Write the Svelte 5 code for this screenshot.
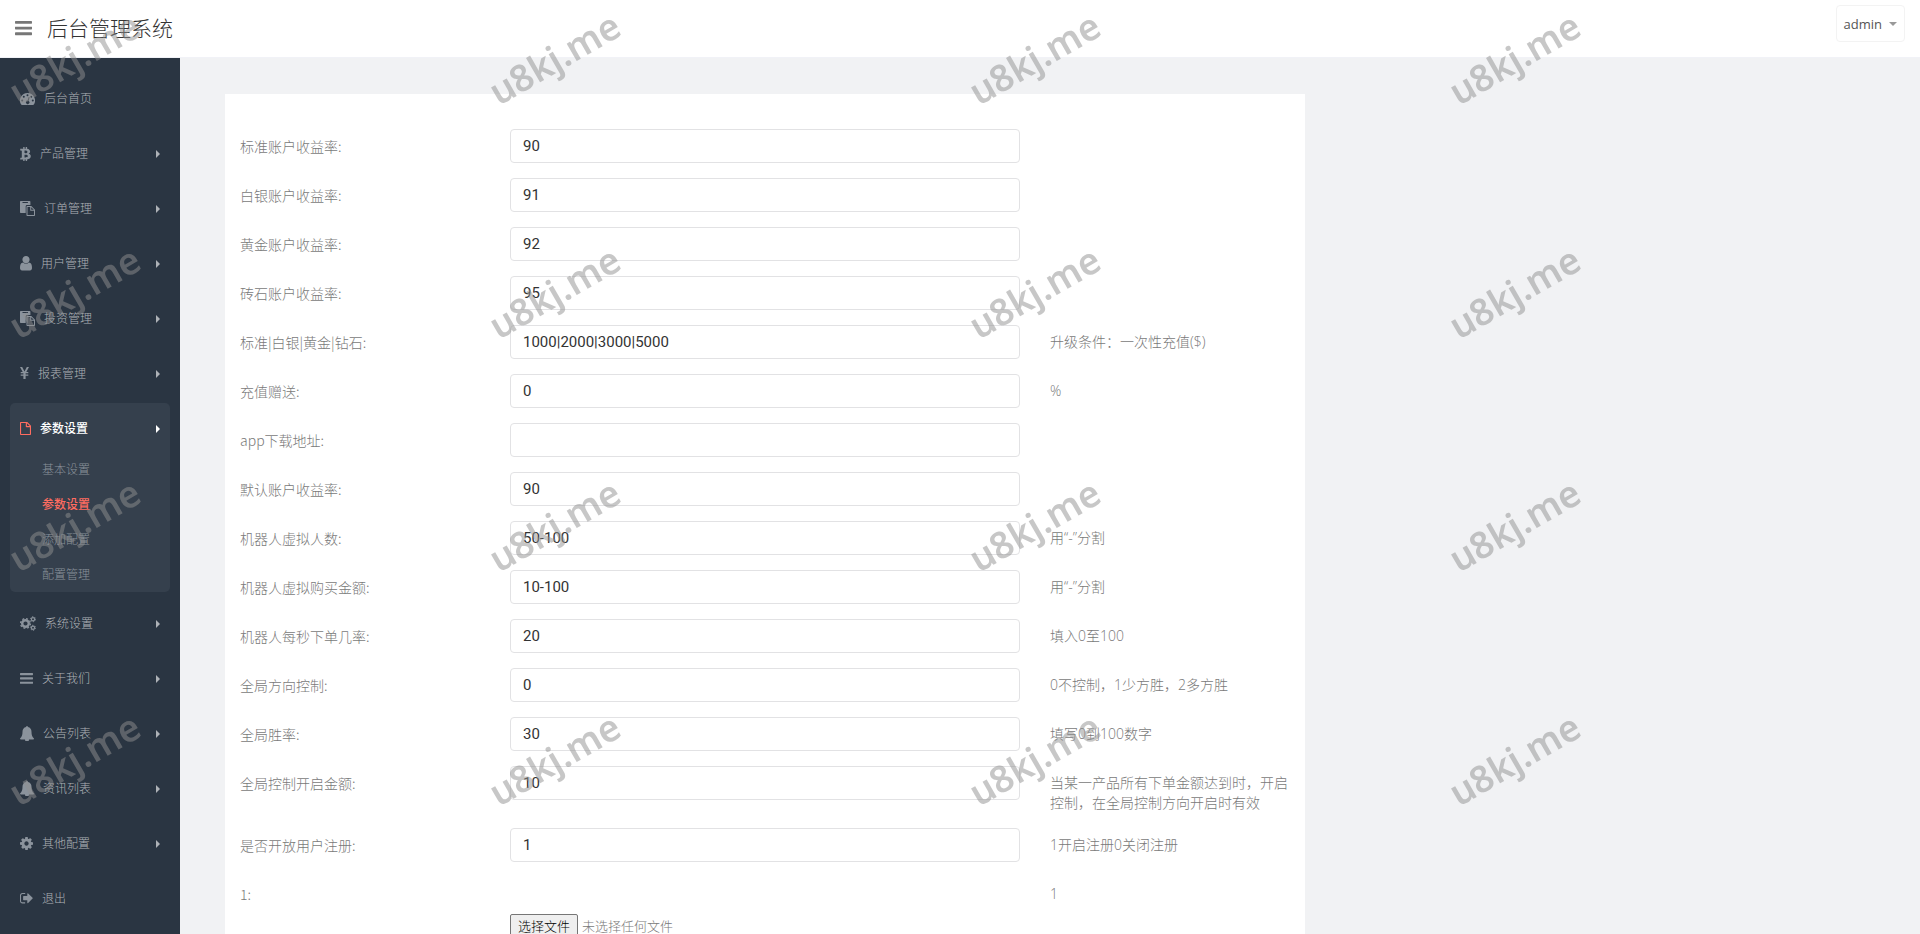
<script>
  const sprites = {
    dashboard: {
      w: 15,
      box: '0 0 15 14',
      d: 'M7.500 1A7.500 7.500 0 0 0 1.200 12.600q.2.400.7.400h11.200q.5 0 .7-.4A7.500 7.500 0 0 0 7.500 1zM2.200 7.600a1 1 0 1 1 0 2 1 1 0 0 1 0-2zM3.800 3.800a1 1 0 1 1 0 2 1 1 0 0 1 0-2zM7.500 2.200a1 1 0 1 1 0 2 1 1 0 0 1 0-2zM11.200 3.800a1 1 0 1 1 0 2 1 1 0 0 1 0-2zM12.800 7.600a1 1 0 1 1 0 2 1 1 0 0 1 0-2zM8.700 4.900l.9.300-1 3.700a1.700 1.700 0 1 1-1-.3z'
    },
    bitcoin: {
      w: 11,
      box: '0 0 11 14',
      d: 'M.2 1.700h3V0h1.400v1.700h1.100V0h1.400v1.800c1.900.2 3 1.200 3 2.800 0 1.100-.5 1.800-1.500 2.200 1.500.3 2.200 1.200 2.200 2.500 0 1.900-1.500 2.900-3.700 3.100V14H5.700v-1.600H4.600V14H3.200v-1.600H.1l.3-1.700h.9q.5 0 .5-.5V4q0-.6-.7-.6H.2zM4.500 3.600v2.500c1.700.1 2.900 0 2.900-1.200S6.200 3.600 4.500 3.600zM4.500 7.800v2.700c2 .1 3.300 0 3.300-1.400S6.500 7.700 4.500 7.800z'
    },
    paste: {
      w: 15,
      box: '0 0 15 15',
      d: 'M.7 0h9q.7 0 .7.700V4H7q-1.300 0-1.300 1.300V12H.7Q0 12 0 11.300V.7Q0 0 .7 0zM2.500 1v1h5.400V1zM7.200 5h4.100l3.700 3.700v5.600q0 .7-.7.700H7.200q-.7 0-.7-.7V5.700q0-.7.7-.7zM7.500 6v8H14V9.800h-3.200q-.6 0-.6-.6V6zM11.200 6.200v2.600h2.600z'
    },
    user: {
      w: 12,
      box: '256 128 1280 1536',
      d: 'M1536 1399q0 109-62.500 187t-150.500 78h-854q-88 0-150.500-78t-62.500-187q0-85 8.500-160.500t31.500-152 58.500-131 94-89 134.500-34.500q131 128 313 128t313-128q76 0 134.500 34.500t94 89 58.500 131 31.500 152 8.500 160.500zm-256-887q0 159-112.500 271.500t-271.500 112.500-271.500-112.500-112.500-271.500 112.500-271.500 271.500-112.500 271.500 112.500 112.500 271.500z'
    },
    yen: {
      w: 9,
      box: '0 0 9 13',
      d: 'M0 0h2.200l2.300 4.500L6.800 0H9L6.300 5h2v1.300H5.600v1.200h2.700v1.300H5.600V12H3.400V8.800H.7V7.500h2.700V6.300H.7V5h2z'
    },
    file: {
      w: 11,
      box: '0 0 11 13',
      d: 'M.8 0h6.500L11 3.700v8.500q0 .8-.8.800H.8Q0 13 0 12.200V.8Q0 0 .8 0zM1.100 1.100v10.800h8.800V5.200H6.600q-.8 0-.8-.8V1.100zM6.900 1.300v2.800h2.800z'
    },
    cogs: { w: 16, box: '0 0 16 15', gears: true },
    bars: {
      w: 13,
      box: '128 256 1536 1280',
      d: 'M1664 1344v128q0 26-19 45t-45 19h-1408q-26 0-45-19t-19-45v-128q0-26 19-45t45-19h1408q26 0 45 19t19 45zm0-512v128q0 26-19 45t-45 19h-1408q-26 0-45-19t-19-45v-128q0-26 19-45t45-19h1408q26 0 45 19t19 45zm0-512v128q0 26-19 45t-45 19h-1408q-26 0-45-19t-19-45v-128q0-26 19-45t45-19h1408q26 0 45 19t19 45z'
    },
    bell: {
      w: 14,
      box: '0 0 14 15',
      d: 'M7 0q.9 0 .9 1.100C10.300 1.600 11.500 3.400 11.500 5.800c0 3.200.7 5.300 2.500 6.700 0 .6-.4 1-1 1H9a2 2 0 0 1-4 0H1q-1 0-1-1c1.800-1.400 2.500-3.500 2.500-6.700 0-2.400 1.200-4.200 3.600-4.700Q6.100 0 7 0z'
    },
    cog: {
      w: 13,
      box: '128 128 1536 1536',
      d: 'M1152 896q0-106-75-181t-181-75-181 75-75 181 75 181 181 75 181-75 75-181zm512-109v222q0 12-8 23t-20 13l-185 28q-19 54-39 91 35 50 107 138 10 12 10 25t-9 23q-27 37-99 108t-94 71q-12 0-26-9l-138-108q-44 23-91 38-16 136-29 186-7 28-36 28h-222q-14 0-24.500-8.500t-11.500-21.500l-28-184q-49-16-90-37l-141 107q-10 9-25 9-14 0-25-11-126-114-165-168-7-10-7-23 0-12 8-23 15-21 51-66.500t54-70.500q-27-50-41-99l-183-27q-13-2-21-12.500t-8-23.500v-222q0-12 8-23t19-13l186-28q14-46 39-92-40-57-107-138-10-12-10-24 0-10 9-23 26-36 98.500-107.500t94.500-71.500q13 0 26 10l138 107q44-23 91-38 16-136 29-186 7-28 36-28h222q14 0 24.500 8.500t11.500 21.500l28 184q49 16 90 37l142-107q9-9 24-9 13 0 25 10 129 119 165 170 7 8 7 22 0 12-8 23-15 21-51 66.500t-54 70.500q26 50 41 98l183 28q13 2 21 12.500t8 23.500z'
    },
    signout: {
      w: 13,
      box: '64 256 1600 1280',
      d: 'M704 1440q0 4 1 20t.5 26.500-3 23.500-10 19.500-20.500 6.500h-320q-119 0-203.500-84.500t-84.500-203.500v-704q0-119 84.500-203.500t203.500-84.500h320q13 0 22.500 9.500t9.500 22.500q0 4 1 20t.5 26.500-3 23.500-10 19.500-20.500 6.500h-320q-66 0-113 47t-47 113v704q0 66 47 113t113 47h312l11.500 1 11.500 3 8 5.500 7 9 2 13.500zm928-544q0 26-19 45l-544 544q-19 19-45 19t-45-19-19-45v-288h-448q-26 0-45-19t-19-45v-384q0-26 19-45t45-19h448v-288q0-26 19-45t45-19 45 19l544 544q19 19 19 45z'
    }
  };

  const menu = [
    { icon: 'dashboard', text: '后台首页', leaf: true },
    { icon: 'bitcoin', text: '产品管理' },
    { icon: 'paste', text: '订单管理' },
    { icon: 'user', text: '用户管理' },
    { icon: 'paste', text: '投资管理' },
    { icon: 'yen', text: '报表管理' },
    {
      icon: 'file',
      text: '参数设置',
      children: ['基本设置', '参数设置', '添加配置', '配置管理'],
      current: 1
    },
    { icon: 'cogs', text: '系统设置' },
    { icon: 'bars', text: '关于我们' },
    { icon: 'bell', text: '公告列表' },
    { icon: 'bell', text: '资讯列表' },
    { icon: 'cog', text: '其他配置' },
    { icon: 'signout', text: '退出', leaf: true }
  ];

  const fields = [
    { label: '标准账户收益率', value: '90' },
    { label: '白银账户收益率', value: '91' },
    { label: '黄金账户收益率', value: '92' },
    { label: '砖石账户收益率', value: '95' },
    { label: '标准|白银|黄金|钻石', value: '1000|2000|3000|5000', hint: '升级条件：一次性充值($)' },
    { label: '充值赠送', value: '0', hint: '%' },
    { label: 'app下载地址', value: '' },
    { label: '默认账户收益率', value: '90' },
    { label: '机器人虚拟人数', value: '50-100', hint: '用“-”分割' },
    { label: '机器人虚拟购买金额', value: '10-100', hint: '用“-”分割' },
    { label: '机器人每秒下单几率', value: '20', hint: '填入0至100' },
    { label: '全局方向控制', value: '0', hint: '0不控制，1少方胜，2多方胜' },
    { label: '全局胜率', value: '30', hint: '填写0到100数字' },
    {
      label: '全局控制开启金额',
      value: '10',
      hint: '当某一产品所有下单金额达到时，开启控制，在全局控制方向开启时有效'
    },
    { label: '是否开放用户注册', value: '1', hint: '1开启注册0关闭注册' }
  ];

  const marks = Array.from({ length: 16 }, (_, i) => i);
</script>

{#snippet icon(name)}
  {@const s = sprites[name]}
  <svg class="icon" style="width: {s.w}px" viewBox={s.box} aria-hidden="true">
    {#if s.gears}
      <g fill="none" stroke="currentColor">
        <circle cx="5.500" cy="7.500" r="3.300" stroke-width="2.400" />
        <circle cx="5.500" cy="7.500" r="4.900" stroke-width="1.400" stroke-dasharray="1.925 1.925" />
        <circle cx="13" cy="3.200" r="1.600" stroke-width="1.200" />
        <circle cx="13" cy="3.200" r="2.500" stroke-width="1" stroke-dasharray="1.310 1.308" />
        <circle cx="13" cy="11.800" r="1.600" stroke-width="1.200" />
        <circle cx="13" cy="11.800" r="2.500" stroke-width="1" stroke-dasharray="1.310 1.308" />
      </g>
    {:else}
      <path d={s.d} fill="currentColor" fill-rule="evenodd" />
    {/if}
  </svg>
{/snippet}

<div class="app">
  <header>
    <button class="toggle" aria-label="菜单">{@render icon('bars')}</button>
    <h1>后台管理系统</h1>
    <button class="account">admin <span class="caret"></span></button>
  </header>

  <div class="body">
    <nav>
      <ul class="menu">
        {#each menu as item}
          <li class:open={item.children}>
            <a class="entry" href="#top">
              {@render icon(item.icon)}
              <span>{item.text}</span>
              {#if !item.leaf}<i class="arrow"></i>{/if}
            </a>
            {#if item.children}
              <ul class="sub">
                {#each item.children as child, i}
                  <li><a href="#top" class:current={i === item.current}>{child}</a></li>
                {/each}
              </ul>
            {/if}
          </li>
        {/each}
      </ul>
    </nav>

    <main>
      <form class="panel">
        {#each fields as field, i}
          <div class="row">
            <label for="field-{i}">{field.label}:</label>
            <div class="control"><input id="field-{i}" type="text" value={field.value} /></div>
            {#if field.hint}<p>{field.hint}</p>{/if}
          </div>
        {/each}
        <div class="row">
          <label for="upload">1:</label>
          <div class="control upload">
            <input id="upload" type="file" />
            <label class="picker" for="upload"><span class="choose">选择文件</span>未选择任何文件</label>
          </div>
          <p>1</p>
        </div>
      </form>
    </main>
  </div>

  <div class="watermark" aria-hidden="true">
    {#each marks as mark (mark)}
      <div><span>u8kj.me</span></div>
    {/each}
  </div>
</div>

<style>
  :global(body) {
    margin: 0;
    overflow: hidden;
  }
  .app,
  .app * {
    box-sizing: border-box;
  }
  .app {
    position: relative;
    display: flex;
    flex-direction: column;
    height: 100vh;
    overflow: hidden;
    background: #f1f2f4;
    color: #797979;
    font: 300 14px/20px 'Open Sans', 'Noto Sans CJK SC', sans-serif;
  }
  button,
  input {
    font-family: inherit;
  }
  a {
    color: inherit;
    text-decoration: none;
  }
  ul {
    list-style: none;
    margin: 0;
    padding: 0;
  }
  header {
    display: flex;
    flex: none;
    align-items: center;
    height: 58px;
    padding: 0 15px;
    background: #fff;
    border-bottom: 1px solid #f1f2f7;
  }
  .icon {
    flex: none;
    display: block;
  }
  .toggle {
    display: flex;
    padding: 0;
    border: 0;
    background: none;
    color: #777;
  }
  .toggle .icon {
    width: 17px !important;
  }
  h1 {
    flex: 1;
    margin: 0 0 0 15px;
    padding-bottom: 2px;
    color: #333;
    font-size: 21px;
    font-weight: 300;
    line-height: 30px;
  }
  .account {
    display: flex;
    align-items: center;
    align-self: flex-start;
    gap: 7px;
    height: 37px;
    margin-top: 5px;
    padding: 0 7px;
    border: 1px solid #f3f3f3;
    border-radius: 4px;
    background: #fff;
    color: #555;
    font-size: 13px;
    line-height: 20px;
  }
  .caret {
    border: 4px solid transparent;
    border-top-color: #999;
    border-bottom: 0;
  }
  .body {
    display: flex;
    flex: 1;
    min-height: 0;
  }
  nav {
    flex: none;
    width: 180px;
    padding: 15px 10px;
    overflow: hidden;
    background: #2a3542;
    color: #aeb2b7;
    font-size: 12px;
  }
  .menu {
    display: flex;
    flex-direction: column;
    gap: 6px;
  }
  .menu > li {
    border-radius: 5px;
  }
  .entry {
    display: flex;
    align-items: center;
    gap: 9px;
    height: 49px;
    padding: 2px 10px 0;
  }
  .entry .icon {
    color: #8b939c;
  }
  .arrow {
    margin-left: auto;
    border: 4px solid transparent;
    border-left-color: #aeb2b7;
    border-right: 0;
  }
  .open {
    background: #35404d;
  }
  .open .entry {
    color: #fff;
    font-weight: 500;
  }
  .open .entry .icon {
    color: #ff6c60;
  }
  .open .arrow {
    border-left-color: #fff;
  }
  .sub a {
    display: block;
    padding-left: 32px;
    color: #8a929b;
    line-height: 35px;
  }
  .sub .current {
    color: #ff6c60;
    font-weight: 500;
  }
  main {
    flex: 1;
    padding: 36px 45px 0;
    overflow: hidden;
  }
  .panel {
    display: flex;
    flex-direction: column;
    gap: 15px;
    max-width: 1080px;
    padding: 35px 0;
    background: #fff;
  }
  .row {
    display: grid;
    grid-template-columns: 1fr 2fr 1fr;
  }
  .row > label,
  .row > p {
    margin: 0;
    padding: 7px 15px 0;
  }
  .row > label {
    font-family: 'Noto Sans CJK SC', sans-serif;
  }
  .control {
    padding: 0 15px;
  }
  .control input[type='text'] {
    display: block;
    width: 100%;
    height: 34px;
    padding: 6px 12px;
    border: 1px solid #e2e2e4;
    border-radius: 4px;
    background: #fff;
    color: #333;
    font-family: Roboto, 'Noto Sans CJK SC', sans-serif;
    font-size: 15px;
    font-weight: 400;
  }
  .upload {
    padding-top: 37px;
  }
  .upload input {
    position: absolute;
    opacity: 0;
    pointer-events: none;
  }
  .picker {
    display: flex;
    align-items: center;
    gap: 4px;
    font-size: 13px;
  }
  .choose {
    padding: 1px 7px;
    border: 1px solid #767676;
    border-radius: 2px;
    background: #efefef;
    color: #000;
  }
  .watermark {
    position: absolute;
    inset: 0;
    display: grid;
    grid-template: repeat(4, 1fr) / repeat(4, 1fr);
    pointer-events: none;
    color: rgba(143, 143, 143, 0.5);
    font: 600 37px/50px 'Noto Sans', sans-serif;
  }
  .watermark div {
    display: flex;
    align-items: flex-start;
    padding: 33px 2px;
  }
  .watermark span {
    transform: rotate(-30deg);
  }
</style>
